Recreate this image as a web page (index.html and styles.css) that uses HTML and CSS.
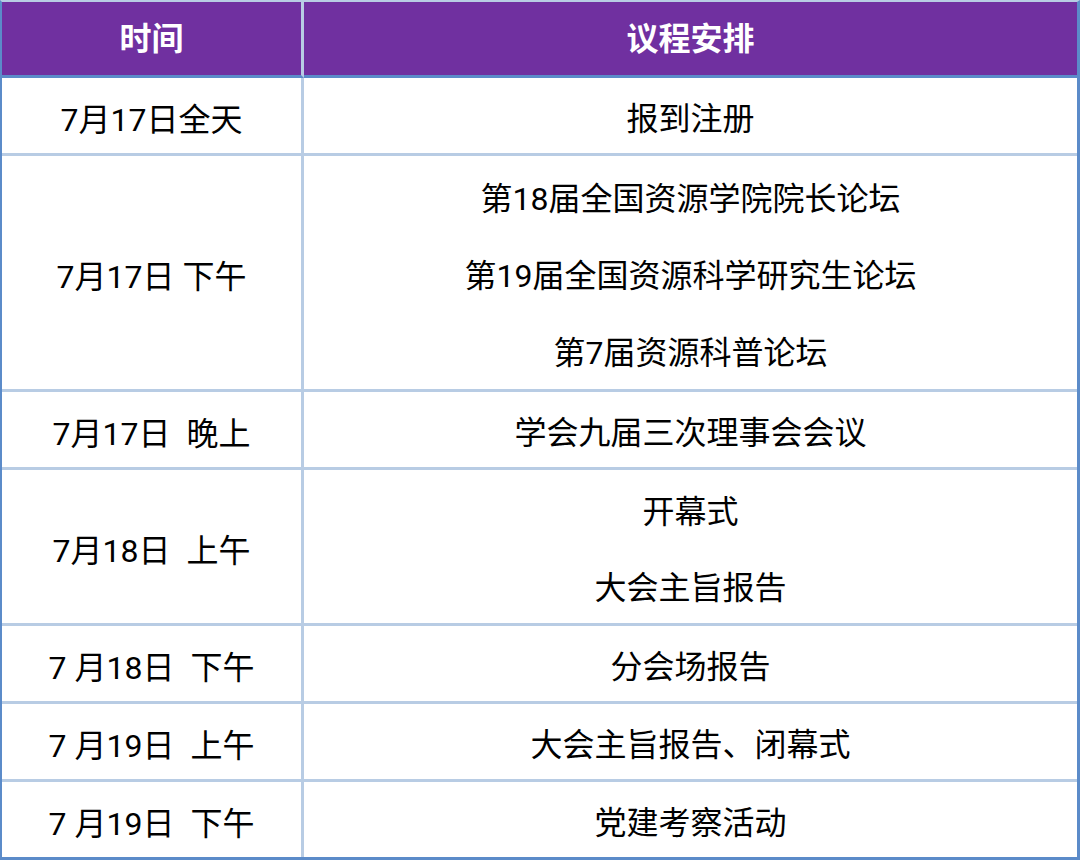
FILE: index.html
```html
<!DOCTYPE html>
<html lang="zh">
<head>
<meta charset="utf-8">
<link rel="stylesheet" href="styles.css">
</head>
<body>
<table class="agenda">
  <colgroup><col class="c-time"><col class="c-item"></colgroup>
  <thead>
    <tr><th class="time">时间</th><th>议程安排</th></tr>
  </thead>
  <tbody>
    <tr class="r1"><td class="time">7月17日全天</td><td><div class="ln">报到注册</div></td></tr>
    <tr class="r3"><td class="time">7月17日 下午</td><td><div class="ln">第18届全国资源学院院长论坛</div><div class="ln">第19届全国资源科学研究生论坛</div><div class="ln">第7届资源科普论坛</div></td></tr>
    <tr class="r1"><td class="time">7月17日  晚上</td><td><div class="ln">学会九届三次理事会会议</div></td></tr>
    <tr class="r2"><td class="time">7月18日  上午</td><td><div class="ln">开幕式</div><div class="ln">大会主旨报告</div></td></tr>
    <tr class="r1"><td class="time">7 月18日  下午</td><td><div class="ln">分会场报告</div></td></tr>
    <tr class="r1"><td class="time">7 月19日  上午</td><td><div class="ln">大会主旨报告、闭幕式</div></td></tr>
    <tr class="r1 last"><td class="time">7 月19日  下午</td><td><div class="ln">党建考察活动</div></td></tr>
  </tbody>
</table>
</body>
</html>
```
FILE: styles.css
```css
html, body {
  margin: 0;
  padding: 0;
  background: #ffffff;
}
body {
  font-family: Roboto, "Noto Sans CJK SC", "Noto Sans", sans-serif;
  width: 1080px;
  height: 860px;
  overflow: hidden;
}
.agenda {
  width: 1080px;
  table-layout: fixed;
  border-collapse: separate;
  border-spacing: 0;
  border-top: 2px solid #b8cce4;
  border-left: 2px solid #5b8bc9;
  border-right: 3px solid #5b8bc9;
  border-bottom: 3px solid #5b8bc9;
  font-size: 32px;
  color: #000000;
}
.c-time { width: 302px; }
th, td {
  padding: 2px 0 0 0;
  text-align: center;
  vertical-align: middle;
  white-space: pre;
}
th {
  background: #7030a0;
  color: #ffffff;
  font-weight: bold;
  height: 71px;
  border-bottom: 3px solid #5b8bc9;
  line-height: 71px;
}
th.time, td.time {
  border-right: 3px solid #b8cce4;
}
td {
  border-bottom: 3px solid #b8cce4;
}
tr.last td {
  border-bottom: none;
}
.r1 td { height: 73px; }
.r2 td { height: 151px; }
.r3 td { height: 229px; }
.ln {
  height: 71px;
  padding-top: 6px;
  line-height: 71px;
}
.r2 .ln { height: 69.5px; line-height: 69.5px; }
.r1 .ln { height: 67px; line-height: 67px; }
```
